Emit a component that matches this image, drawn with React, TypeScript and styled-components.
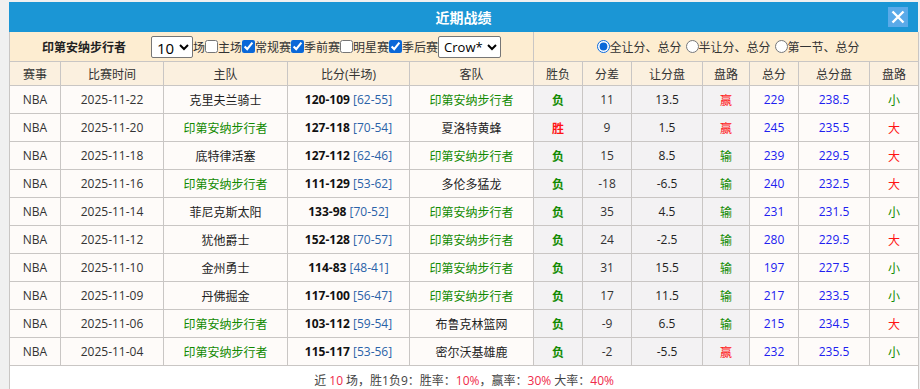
import React from 'react'
import styled, { createGlobalStyle } from 'styled-components'

const GlobalStyle = createGlobalStyle`
  html, body {
    margin: 0;
    padding: 0;
    background: #f0f0f0;
  }
  body {
    font-family: "Open Sans", "Noto Sans CJK SC", sans-serif;
    font-size: 12px;
    color: #333;
  }
`

const Panel = styled.div`
  margin: 2px 0 0 9px;
  width: 909px;
  background: #fff;
`

const TitleBar = styled.div`
  position: relative;
  height: 30px;
  background: #1b96d5;
  color: #fff;
  display: flex;
  align-items: center;
  justify-content: center;
  font-size: 14px;
  font-weight: bold;
  font-family: "Noto Sans CJK SC", sans-serif;
`

const CloseButton = styled.div`
  position: absolute;
  right: 10px;
  top: 5px;
  width: 20px;
  height: 20px;
  background: #5aaae9;
  display: flex;
  align-items: center;
  justify-content: center;
`

const Table = styled.table`
  width: 909px;
  border-collapse: collapse;
  table-layout: fixed;
  td, th {
    border: 1px solid #c9c6c4;
    padding: 0;
    text-align: center;
    white-space: nowrap;
  }
`

const FilterCell = styled.td`
  height: 29px;
  background: #fdedd1;
  border-top: none !important;
  font-size: 12px;
`

const FilterInner = styled.div`
  display: flex;
  align-items: center;
  justify-content: center;
`

const TeamLabel = styled.span`
  font-weight: bold;
  color: #222;
  margin-right: 25px;
`

const Select = styled.select<{ $size: number }>`
  height: 22px;
  font-size: ${p => p.$size}px;
  font-family: "Open Sans", sans-serif;
  border: 1px solid #767676;
  border-radius: 2px;
  background: #fff;
  color: #000;
  padding: 0 1px;
`

const Check = styled.input`
  margin: 0;
  width: 13px;
  height: 13px;
  accent-color: #0a68d8;
`

const Radio = styled.input`
  margin: 0 0 0 4px;
  width: 13px;
  height: 13px;
  accent-color: #0a68d8;
`

const HeadCell = styled.th`
  height: 23px;
  background: #fbf0df;
  font-weight: normal;
  color: #333;
`

const Cell = styled.td<{ $grey?: boolean; $color?: string; $bold?: boolean }>`
  height: 27px;
  background: ${p => (p.$grey ? '#f3f2f3' : '#fefbf9')};
  color: ${p => p.$color || '#333'};
  font-weight: ${p => (p.$bold ? 'bold' : 'normal')};
`

const Score = styled.b`
  color: #111;
`

const Half = styled.span`
  color: #2a62a8;
`

const Footer = styled.td`
  height: 27px;
  vertical-align: middle;
  background: #fff;
  color: #444;
  border-bottom: none !important;
`

const Red = styled.span`
  color: #ef2a4a;
`

const GREEN = '#118a00'
const RED = '#ff1414'
const BLUE = '#2020f0'
const TEAM = '印第安纳步行者'

type Row = string[]

const rows: Row[] = [
  ['2025-11-22', '克里夫兰骑士', '120-109', '62-55', TEAM, '负', '11', '13.5', '赢', '229', '238.5', '小'],
  ['2025-11-20', TEAM, '127-118', '70-54', '夏洛特黄蜂', '胜', '9', '1.5', '赢', '245', '235.5', '大'],
  ['2025-11-18', '底特律活塞', '127-112', '62-46', TEAM, '负', '15', '8.5', '输', '239', '229.5', '大'],
  ['2025-11-16', TEAM, '111-129', '53-62', '多伦多猛龙', '负', '-18', '-6.5', '输', '240', '232.5', '大'],
  ['2025-11-14', '菲尼克斯太阳', '133-98', '70-52', TEAM, '负', '35', '4.5', '输', '231', '231.5', '小'],
  ['2025-11-12', '犹他爵士', '152-128', '70-57', TEAM, '负', '24', '-2.5', '输', '280', '229.5', '大'],
  ['2025-11-10', '金州勇士', '114-83', '48-41', TEAM, '负', '31', '15.5', '输', '197', '227.5', '小'],
  ['2025-11-09', '丹佛掘金', '117-100', '56-47', TEAM, '负', '17', '11.5', '输', '217', '233.5', '小'],
  ['2025-11-06', TEAM, '103-112', '59-54', '布鲁克林篮网', '负', '-9', '6.5', '输', '215', '234.5', '大'],
  ['2025-11-04', TEAM, '115-117', '53-56', '密尔沃基雄鹿', '负', '-2', '-5.5', '赢', '232', '235.5', '小'],
]

const widths = [51, 103, 124, 122, 124, 49, 49, 71, 47, 49, 71, 49]
const heads = ['赛事', '比赛时间', '主队', '比分(半场)', '客队', '胜负', '分差', '让分盘', '盘路', '总分', '总分盘', '盘路']

const good = (v: string) => (v === '胜' || v === '赢' || v === '大' ? RED : GREEN)

export default function App() {
  return (
    <>
      <GlobalStyle />
      <Panel>
        <TitleBar>
          近期战绩
          <CloseButton>
            <svg width="14" height="14" viewBox="0 0 14 14">
              <path d="M1.5 1.5 L12.5 12.5 M12.5 1.5 L1.5 12.5" stroke="#fff" strokeWidth="2.4" />
            </svg>
          </CloseButton>
        </TitleBar>
        <Table>
          <colgroup>
            {widths.map((w, i) => (
              <col key={i} style={{ width: w }} />
            ))}
          </colgroup>
          <tbody>
            <tr>
              <FilterCell colSpan={5}>
                <FilterInner>
                  <TeamLabel>印第安纳步行者</TeamLabel>
                  <Select $size={15} defaultValue="10">
                    <option>10</option>
                    <option>20</option>
                  </Select>
                  场<Check type="checkbox" />主场
                  <Check type="checkbox" defaultChecked />常规赛
                  <Check type="checkbox" defaultChecked />季前赛
                  <Check type="checkbox" />明星赛
                  <Check type="checkbox" defaultChecked />季后赛
                  <Select $size={13} defaultValue="Crow*">
                    <option>Crow*</option>
                  </Select>
                </FilterInner>
              </FilterCell>
              <FilterCell colSpan={7}>
                <FilterInner>
                  <Radio type="radio" name="pk" defaultChecked />全让分、总分
                  <Radio type="radio" name="pk" />半让分、总分
                  <Radio type="radio" name="pk" />第一节、总分
                </FilterInner>
              </FilterCell>
            </tr>
            <tr>
              {heads.map((h, i) => (
                <HeadCell key={i}>{h}</HeadCell>
              ))}
            </tr>
            {rows.map((r, i) => (
              <tr key={i}>
                <Cell>NBA</Cell>
                <Cell>{r[0]}</Cell>
                <Cell $color={r[1] === TEAM ? GREEN : '#222'}>{r[1]}</Cell>
                <Cell>
                  <Score>{r[2]}</Score> <Half>[{r[3]}]</Half>
                </Cell>
                <Cell $color={r[4] === TEAM ? GREEN : '#222'}>{r[4]}</Cell>
                <Cell $grey $bold $color={good(r[5])}>{r[5]}</Cell>
                <Cell $grey>{r[6]}</Cell>
                <Cell $grey $color="#222">{r[7]}</Cell>
                <Cell $grey $color={good(r[8])}>{r[8]}</Cell>
                <Cell $color={BLUE}>{r[9]}</Cell>
                <Cell $color={BLUE}>{r[10]}</Cell>
                <Cell $color={good(r[11])}>{r[11]}</Cell>
              </tr>
            ))}
            <tr>
              <Footer colSpan={12}>
                近 <Red>10</Red> 场，胜1负9：胜率：<Red>10%</Red>，赢率：<Red>30%</Red> 大率：<Red>40%</Red>
              </Footer>
            </tr>
          </tbody>
        </Table>
      </Panel>
    </>
  )
}
